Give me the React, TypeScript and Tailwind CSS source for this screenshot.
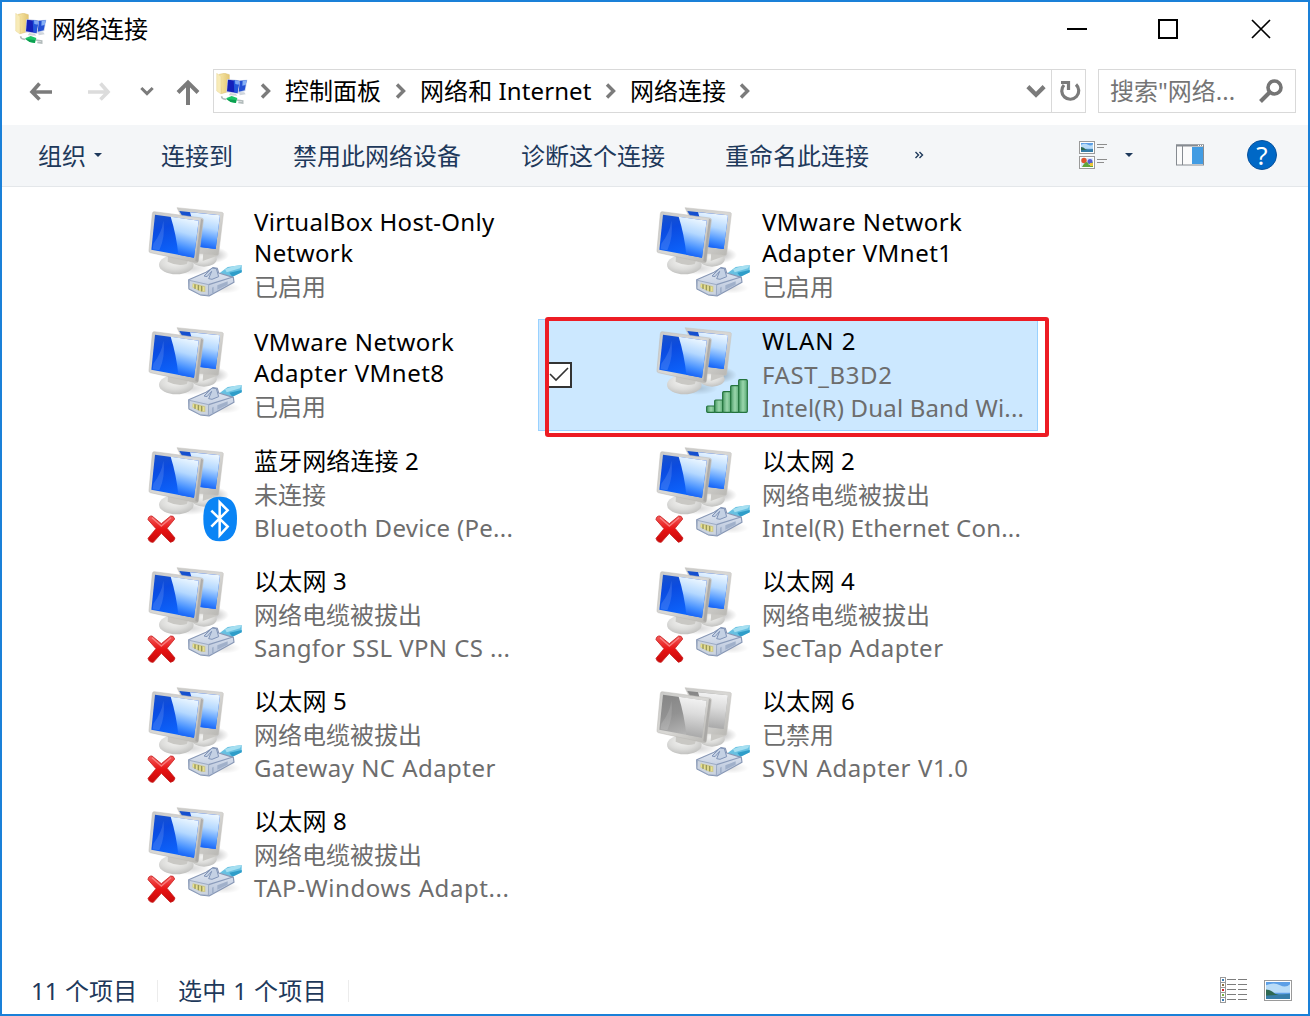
import React from 'react';

type Badge = 'cable' | 'wifi' | 'bluetooth';
type Line = { text: string; cls?: string };
type Connection = {
  title: Line[];
  sub: Line[];
  badge: Badge;
  error?: boolean;
  disabled?: boolean;
  selected?: boolean;
};

const connections: Connection[] = [
  { title: [{ text: 'VirtualBox Host-Only', cls: 'tracking-[0.3px]' }, { text: 'Network', cls: 'tracking-[0.4px]' }], sub: [{ text: '已启用' }], badge: 'cable' },
  { title: [{ text: 'VMware Network', cls: 'tracking-[0.43px]' }, { text: 'Adapter VMnet1', cls: 'tracking-[0.5px]' }], sub: [{ text: '已启用' }], badge: 'cable' },
  { title: [{ text: 'VMware Network', cls: 'tracking-[0.43px]' }, { text: 'Adapter VMnet8', cls: 'tracking-[0.5px]' }], sub: [{ text: '已启用' }], badge: 'cable' },
  { title: [{ text: 'WLAN 2', cls: 'tracking-[1px]' }], sub: [{ text: 'FAST_B3D2', cls: 'tracking-[0.6px]' }, { text: 'Intel(R) Dual Band Wi...', cls: 'tracking-[0.18px]' }], badge: 'wifi', selected: true },
  { title: [{ text: '蓝牙网络连接 2', cls: 'tracking-[0.1px]' }], sub: [{ text: '未连接' }, { text: 'Bluetooth Device (Pe...', cls: 'tracking-[0.3px]' }], badge: 'bluetooth', error: true },
  { title: [{ text: '以太网 2', cls: 'tracking-[0.2px]' }], sub: [{ text: '网络电缆被拔出' }, { text: 'Intel(R) Ethernet Con...', cls: 'tracking-[0.2px]' }], badge: 'cable', error: true },
  { title: [{ text: '以太网 3', cls: 'tracking-[0.2px]' }], sub: [{ text: '网络电缆被拔出' }, { text: 'Sangfor SSL VPN CS ...', cls: 'tracking-[0.4px]' }], badge: 'cable', error: true },
  { title: [{ text: '以太网 4', cls: 'tracking-[0.2px]' }], sub: [{ text: '网络电缆被拔出' }, { text: 'SecTap Adapter', cls: 'tracking-[0.5px]' }], badge: 'cable', error: true },
  { title: [{ text: '以太网 5', cls: 'tracking-[0.2px]' }], sub: [{ text: '网络电缆被拔出' }, { text: 'Gateway NC Adapter', cls: 'tracking-[0.46px]' }], badge: 'cable', error: true },
  { title: [{ text: '以太网 6', cls: 'tracking-[0.2px]' }], sub: [{ text: '已禁用' }, { text: 'SVN Adapter V1.0', cls: 'tracking-[0.6px]' }], badge: 'cable', disabled: true },
  { title: [{ text: '以太网 8', cls: 'tracking-[0.2px]' }], sub: [{ text: '网络电缆被拔出' }, { text: 'TAP-Windows Adapt...', cls: 'tracking-[0.56px]' }], badge: 'cable', error: true },
];

function Gradients() {
  return (
    <svg className="absolute h-0 w-0" aria-hidden="true">
      <defs>
        <linearGradient id="frame" x1="0" y1="0" x2="1" y2="1">
          <stop offset="0" stopColor="#c9c9c7" />
          <stop offset="0.5" stopColor="#d9d8d5" />
          <stop offset="1" stopColor="#b5b4b0" />
        </linearGradient>
        <linearGradient id="blue" x1="0" y1="0" x2="0.35" y2="1">
          <stop offset="0" stopColor="#1b52c8" />
          <stop offset="0.35" stopColor="#0b4be0" />
          <stop offset="1" stopColor="#0d66ff" />
        </linearGradient>
        <linearGradient id="shine" x1="0.6" y1="0" x2="0.4" y2="1">
          <stop offset="0.05" stopColor="#e9f5ff" />
          <stop offset="0.4" stopColor="#b4d8ff" />
          <stop offset="0.75" stopColor="#4590ff" />
          <stop offset="1" stopColor="#0a58f5" />
        </linearGradient>
        <linearGradient id="gray" x1="0" y1="0" x2="0.35" y2="1">
          <stop offset="0" stopColor="#858585" />
          <stop offset="0.5" stopColor="#929292" />
          <stop offset="1" stopColor="#b5b5b5" />
        </linearGradient>
        <linearGradient id="grayShine" x1="0.5" y1="0" x2="0.4" y2="1">
          <stop offset="0" stopColor="#f4f4f4" />
          <stop offset="0.4" stopColor="#dcdcdc" />
          <stop offset="1" stopColor="#a6a6a6" />
        </linearGradient>
        <radialGradient id="base" cx="0.45" cy="0.35" r="0.65">
          <stop offset="0" stopColor="#f4f4f2" />
          <stop offset="0.6" stopColor="#dcdcda" />
          <stop offset="1" stopColor="#c2c2c0" />
        </radialGradient>
        <radialGradient id="shadow">
          <stop offset="0" stopColor="#000" stopOpacity="0.35" />
          <stop offset="1" stopColor="#000" stopOpacity="0" />
        </radialGradient>
        <linearGradient id="bar" x1="0" y1="0" x2="1" y2="0">
          <stop offset="0" stopColor="#4c9c68" />
          <stop offset="0.5" stopColor="#9ad6ac" />
          <stop offset="1" stopColor="#57a873" />
        </linearGradient>
        <linearGradient id="cross" x1="0" y1="0" x2="0" y2="1">
          <stop offset="0" stopColor="#f25a5a" />
          <stop offset="0.5" stopColor="#e81414" />
          <stop offset="1" stopColor="#c80808" />
        </linearGradient>
        <linearGradient id="plug" x1="0" y1="0" x2="0" y2="1">
          <stop offset="0" stopColor="#e6ecf5" />
          <stop offset="1" stopColor="#b4c1d8" />
        </linearGradient>
        <linearGradient id="folder" x1="0" y1="0" x2="1" y2="0">
          <stop offset="0" stopColor="#f7e7a8" />
          <stop offset="1" stopColor="#e3c673" />
        </linearGradient>
      </defs>
    </svg>
  );
}

function ConnectionIcon({ badge, error, disabled }: Pick<Connection, 'badge' | 'error' | 'disabled'>) {
  const dark = disabled ? 'url(#gray)' : 'url(#blue)';
  const light = disabled ? 'url(#grayShine)' : 'url(#shine)';
  const bars = [[198, 286], [222, 268], [246, 243], [270, 225], [294, 207]];
  return (
    <svg width="100" height="100" viewBox="18 18 300 300" className="shrink-0">
      <ellipse cx="205" cy="165" rx="62" ry="26" fill="url(#shadow)" />
      <ellipse cx="150" cy="205" rx="60" ry="20" fill="url(#shadow)" opacity="0.5" />
      <ellipse cx="192" cy="178" rx="38" ry="22" fill="url(#base)" />
      <path d="M190 155l35-4 3 18-40 14z" fill="#c9c8c4" />
      <path d="M111 23l135 14q5 1 4 6l-14 118q-1 6-6 5l-55-6z" fill="url(#frame)" stroke="#c4c3bf" strokeWidth="1.5" />
      <path d="M118 33l122 13-13 101-49-6z" fill={dark} />
      <path d="M150 37l90 9-13 101-45-6z" fill={light} />
      <ellipse cx="109" cy="194" rx="52" ry="29" fill="url(#base)" />
      <path d="M84 166l62 10-6 16q-28 8-57-7z" fill="#c9c8c4" />
      <path d="M43 35l142 19q6 1 5 7l-15 122q-1 6-7 5L31 158q-5-1-4-7L37 41q1-7 6-6z" fill="url(#frame)" stroke="#bab9b5" strokeWidth="1.5" />
      <path d="M183 56l6 3-15 127-8-3z" fill="#a5a4a1" opacity="0.8" />
      <path d="M45 44l131 18-14 111L34 149z" fill={dark} />
      <path d="M92 50l84 12-14 111-47-9q-6-60-23-114z" fill={light} />
      <path d="M40 131q26-34 30-69 7 46-12 89l-20-3z" fill="#fff" opacity="0.13" />
      {badge === 'cable' && (
        <g>
          <ellipse cx="248" cy="264" rx="55" ry="17" fill="url(#shadow)" opacity="0.35" />
          <path d="M240 218l23-17 42-6v22l-24 12-16 8z" fill="#68c1e2" />
          <path d="M255 207l28-9 22-3-5 10-40 12z" fill="#a5dff1" />
          <path d="M268 218l37-8v7l-28 13z" fill="#2f9dc9" />
          <path d="M146 239l52-22 21-14 13 2 4 14 44 13 2 15-75 41-25-3-35-18z" fill="url(#plug)" stroke="#8797b5" strokeWidth="3.5" strokeLinejoin="round" />
          <path d="M148 241l58 13-1 32-24-2-34-18z" fill="#ccd4df" stroke="#8797b5" strokeWidth="2" />
          <path d="M206 254l73-23" fill="none" stroke="#8a9bba" strokeWidth="3.5" />
          <path d="M192 228l24-24 13 2 7 24-20 8-10-2 9-22-14 16z" fill="#c4d1e4" stroke="#8094b8" strokeWidth="3" />
          <path d="M158 250l38 9v17l-12-1-27-13z" fill="#cfc98b" />
          <path d="M165 253v14M175 255v16M185 258v16" stroke="#90904f" strokeWidth="3" />
          <path d="M160 253v9M170 256v12M180 259v13M191 261v12" stroke="#eee88a" strokeWidth="3" />
          <path d="M216 263l5-3v19l-5 3zM232 256l31-12v10l-31 15z" fill="#a0b0ca" />
        </g>
      )}
      {badge === 'wifi' && (
        <g transform="translate(-24 -30)">
          {bars.map(([x, y]) => (
            <rect key={x} x={x + 2} y={y + 2} width="26" height={307 - y - 2} rx="3" fill="url(#bar)" stroke="#24733e" strokeWidth="3.5" />
          ))}
        </g>
      )}
      {badge === 'bluetooth' && (
        <g>
          <path d="M240 170c36 0 51 22 51 66s-15 68-51 68-50-24-50-68 14-66 50-66z" fill="#0a84f5" />
          <path d="M214 212l49 48-24 26v-99l24 24-49 49" fill="none" stroke="#fff" strokeWidth="7.5" />
        </g>
      )}
      {error && (
        <g>
          <path d="M36 228l28 23 28-23q9-2 12 9l-23 28 24 29q-2 12-14 13l-27-27-24 27q-13 1-16-12l24-29-24-27q1-12 12-11z" fill="url(#cross)" stroke="#c92222" strokeWidth="2.5" />
          <path d="M36 233l28 25 29-25" fill="none" stroke="#ff9b9b" strokeWidth="4" opacity="0.7" />
        </g>
      )}
    </svg>
  );
}

function FolderIcon() {
  return (
    <svg width="32" height="32" viewBox="0 0 96 96" className="shrink-0">
      <path d="M10 4l16-3 14 4v50l-24 7z" fill="url(#folder)" stroke="#d8bd6c" strokeWidth="1.5" />
      <path d="M2 1l13 9v53L2 54z" fill="#f8ebb8" stroke="#e0cb84" strokeWidth="1" />
      <path d="M64 22l30-2-6 34-20 5z" fill="#c5d0e8" />
      <path d="M66 24l26-2-6 30-18 4z" fill="#2450d4" />
      <path d="M80 23l12-1-3 14-10 2z" fill="#86b0f6" />
      <path d="M69 57l16 1 4 6-18 3z" fill="#cfd5dc" />
      <path d="M34 18l38 4-5 41-36-6z" fill="#c3cce4" />
      <path d="M36 20l34 4-6 36-31-5z" fill="#1420ba" />
      <path d="M53 22l17 2-6 36-9-2z" fill="#2357da" />
      <path d="M57 22l13 2-2 11-10-2z" fill="#7fa8f5" />
      <path d="M43 60l17 3 4 5-26-1z" fill="#cfd3d6" />
      <path d="M17 70q0 9 13 9M62 81l18 3v6l-13-2" fill="none" stroke="#b3bcbc" strokeWidth="5" />
      <path d="M30 76l17-7 17 6-4 15-16-3z" fill="#1cc566" />
      <path d="M30 78l30 3v9l-16-3z" fill="#0ba050" />
    </svg>
  );
}

function Crumb({ children, className }: { children: React.ReactNode; className: string }) {
  return <span className={`whitespace-nowrap ${className}`}>{children}</span>;
}

function Chevron({ down = false, size = 16 }: { down?: boolean; size?: number }) {
  return (
    <svg width={size} height={size} viewBox="0 0 16 16" fill="none" stroke="#7b7b7b" strokeWidth="3.4" className="shrink-0">
      <path d={down ? 'M1.5 4.5L8 11l6.5-6.5' : 'M4 1.5L10.5 8 4 14.500'} />
    </svg>
  );
}

function Tile({ item }: { item: Connection }) {
  const two = item.title.length === 2;
  return (
    <div
      className={`relative flex h-[112px] w-[500px] border pl-[115px] pt-[6px] ${
        item.selected ? 'border-[#99d1ff] bg-[#cce8ff]' : 'border-transparent'
      }`}
    >
      {item.selected && (
        <>
          <svg width="26" height="26" viewBox="0 0 26 26" className="absolute left-[7px] top-[42px]">
            <rect x="1" y="1" width="24" height="24" fill="#fff" stroke="#333" strokeWidth="2" />
            <path d="M4 12l6 6L22 6" fill="none" stroke="#333" strokeWidth="1.6" />
          </svg>
          <div className="absolute -top-[3px] left-[6px] h-[120px] w-[504px] rounded-[3px] border-4 border-[#ed1c24]" />
        </>
      )}
      <ConnectionIcon badge={item.badge} error={item.error} disabled={item.disabled} />
      <div className={`ml-[8px] whitespace-nowrap ${two ? 'pt-px' : ''}`}>
        <div className="-mt-px mb-[3px]">
          {item.title.map((l) => (
            <div key={l.text} className={`h-[31px] leading-[31px] text-black ${l.cls ?? ''}`}>{l.text}</div>
          ))}
        </div>
        {item.sub.map((l) => (
          <div key={l.text} className={`mb-[2px] h-[31px] leading-[31px] text-[#6d6d6d] ${l.cls ?? ''}`}>{l.text}</div>
        ))}
      </div>
    </div>
  );
}

function Landscape() {
  return (
    <g>
      <rect width="24" height="16" fill="#5c9fe6" />
      <path d="M0 3q8-3 14 0t10-1v8H0z" fill="#b9dcf7" />
      <path d="M0 9q5 0 9 2.500l8 .5h7v4H0z" fill="#3d7f89" />
      <path d="M0 7q5 0 9 4l6 2H0z" fill="#2f6952" />
      <path d="M0 13l24-2v5H0z" fill="#377da8" />
    </g>
  );
}

export default function App() {
  return (
    <div className="flex h-[1016px] w-[1310px] flex-col overflow-hidden border-2 border-[#1a80d8] bg-white font-['Noto_Sans','Noto_Sans_CJK_SC',sans-serif] text-[24px]">
      <Gradients />
      <header className="flex h-[54px] shrink-0 items-center pl-[13px]">
        <FolderIcon />
        <h1 className="ml-[5px] leading-[32px] text-black">网络连接</h1>
        <div className="ml-auto mr-[36px] flex items-center">
          <svg width="22" height="22" viewBox="0 0 22 22"><path d="M1 11h20" stroke="#000" strokeWidth="2" /></svg>
          <svg width="22" height="22" viewBox="0 0 22 22" className="ml-[69px]"><rect x="2" y="2" width="18" height="18" fill="none" stroke="#000" strokeWidth="2" /></svg>
          <svg width="22" height="22" viewBox="0 0 22 22" className="ml-[71px]"><path d="M2 2l18 18M20 2L2 20" stroke="#000" strokeWidth="1.7" /></svg>
        </div>
      </header>

      <nav className="flex h-[69px] shrink-0 items-start pt-[13px]">
        <div className="flex h-[44px] w-[209px] items-center pl-[26px]">
          <svg width="24" height="20" viewBox="0 0 24 20" fill="none" stroke="#7b7b7b" strokeWidth="3.6"><path d="M24 11H4M11.500 2.500L4 11l7.500 7.500" /></svg>
          <svg width="24" height="20" viewBox="0 0 24 20" fill="none" stroke="#dcdcdc" strokeWidth="3.600" className="ml-[36px]"><path d="M0 11h20M12.500 2.500L20 11l-7.500 7.500" /></svg>
          <span className="ml-[28px] flex"><Chevron down size={14} /></span>
          <svg width="24" height="26" viewBox="0 0 24 26" fill="none" stroke="#7b7b7b" strokeWidth="4" className="ml-[22px] mt-[2px]"><path d="M12 26V4M2 13.500L12 3.500l10 10" /></svg>
        </div>
        <div className="ml-[2px] flex h-[44px] w-[873px] items-center border border-[#d9d9d9]">
          <span className="ml-[2px] mt-[-4px] flex"><FolderIcon /></span>
          <span className="ml-[4px] mr-[6px] flex w-[27px] justify-center"><Chevron /></span>
          <Crumb className="w-[96px]">控制面板</Crumb>
          <span className="flex w-[39px] justify-center"><Chevron /></span>
          <Crumb className="w-[172px] tracking-[0.09px]">网络和 Internet</Crumb>
          <span className="flex w-[38px] justify-center"><Chevron /></span>
          <Crumb className="w-[96px]">网络连接</Crumb>
          <span className="flex w-[38px] justify-center"><Chevron /></span>
          <span className="ml-auto mr-[5px] flex"><Chevron down size={20} /></span>
          <div className="flex h-full w-[34px] items-center justify-center border-l border-[#d9d9d9]">
            <svg width="22" height="22" viewBox="0 0 22 22" fill="none" stroke="#7b7b7b" strokeWidth="3.2" className="ml-[2px]">
              <path d="M5 5a8.500 8.500 0 1 0 12-.5" />
              <path d="M2 2.500h7.500V10" />
            </svg>
          </div>
        </div>
        <div className="ml-[12px] flex h-[44px] w-[198px] items-center border border-[#d9d9d9] pl-[11px] text-[#757575]">
          <span className="whitespace-nowrap">搜索"网络...</span>
          <svg width="24" height="24" viewBox="0 0 24 24" fill="none" stroke="#757575" strokeWidth="3.600" className="ml-auto mr-[12px]">
            <circle cx="15.500" cy="8.500" r="6.500" />
            <path d="M11 13L1.500 22.500" strokeWidth="4" />
          </svg>
        </div>
      </nav>

      <div className="flex h-[62px] shrink-0 items-center border-b border-[#e4e7ea] bg-[#f4f6f8] pl-[36px] text-[#1e395b]">
        <span className="w-[48px] whitespace-nowrap">组织</span>
        <span className="ml-[8px] -mt-px h-0 w-0 border-x-[4px] border-t-[4px] border-x-transparent border-t-[#1e395b]" />
        <span className="ml-[59px] w-[72px] whitespace-nowrap">连接到</span>
        <span className="ml-[60px] w-[168px] whitespace-nowrap">禁用此网络设备</span>
        <span className="ml-[60px] w-[144px] whitespace-nowrap">诊断这个连接</span>
        <span className="ml-[60px] w-[144px] whitespace-nowrap">重命名此连接</span>
        <svg width="10" height="8" viewBox="0 0 10 8" fill="none" stroke="#1e395b" strokeWidth="1.400" className="ml-[45px] -mt-[2px]"><path d="M1.500 1l3 3-3 3M5.500 1l3 3-3 3" /></svg>
        <svg width="30" height="30" viewBox="0 0 30 30" className="-mt-[2px] ml-[154px]">
          <rect x="1.500" y="1.500" width="15" height="12" fill="#fff" stroke="#9a9a9a" />
          <svg x="3" y="3" width="12" height="9" viewBox="0 0 24 16" preserveAspectRatio="none"><Landscape /></svg>
          <rect x="1.500" y="16.500" width="15" height="12" fill="#fff" stroke="#9a9a9a" />
          <rect x="3" y="18" width="12" height="9" fill="#dce9fb" />
          <circle cx="6" cy="20.500" r="2.700" fill="#e0532c" />
          <circle cx="12" cy="21.500" r="2.500" fill="#595ed0" />
          <path d="M4 27q5-9 7-2l4-3v5z" fill="#5fa43b" />
          <path d="M12 23h3v3h-3z" fill="#efc43b" />
          <path d="M19 4.500h10M19 7.500h7M19 19.500h10M19 22.500h7" stroke="#8d8d8d" />
        </svg>
        <span className="-mt-px ml-[17px] h-0 w-0 border-x-[4px] border-t-[4px] border-x-transparent border-t-[#1e395b]" />
        <svg width="28" height="22" viewBox="0 0 28 22" className="-mt-[2px] ml-[43px]">
          <rect x="0.500" y="1" width="27" height="20" fill="#fbfbfb" stroke="#868b91" />
          <path d="M0 1.500h28" stroke="#868b91" strokeWidth="2" />
          <path d="M6.500 2v19" stroke="#868b91" />
          <rect x="16" y="3" width="11" height="17" fill="#429ce3" />
          <path d="M22 1.500h1M24 1.500h1M26 1.500h1" stroke="#fff" />
        </svg>
        <span className="-mt-[2px] ml-[43px] flex h-[30px] w-[30px] items-center justify-center rounded-full border border-[#0a529c] bg-[#0068c6] font-['Noto_Sans'] text-[26px] leading-none text-white">?</span>
      </div>

      <main className="grid grow grid-cols-[500px_500px] content-start gap-x-[8px] gap-y-[8px] pl-[28px] pt-[12px]">
        {connections.map((item) => (
          <Tile key={item.title.map((l) => l.text).join(' ') + item.badge} item={item} />
        ))}
      </main>

      <footer className="flex h-[46px] shrink-0 items-center pl-[29px] text-[#1e395b]">
        <span className="w-[126px] whitespace-nowrap tracking-[0.1px]">11 个项目</span>
        <span className="h-[22px] w-px bg-[#ececec]" />
        <span className="ml-[20px] w-[170px] whitespace-nowrap tracking-[0.35px]">选中 1 个项目</span>
        <span className="h-[22px] w-px bg-[#ececec]" />
        <svg width="28" height="28" viewBox="0 0 28 28" className="ml-auto">
          {[0, 5, 10, 15, 20].map((y, i) => (
            <g key={y}>
              <rect x="0.500" y={y + 0.5} width="5" height="5" fill="#fff" stroke="#9a9a9a" />
              <rect x="2" y={y + 2} width="2" height="2" fill={['#3a7cb5', '#8b7040', '#d02020', '#7bb040', '#3a7cb5'][i]} />
              <path d={`M7 ${y + 2.5}h9M18 ${y + 2.5}h9`} stroke="#7d7d7d" />
            </g>
          ))}
        </svg>
        <svg width="28" height="22" viewBox="0 0 28 22" className="ml-[16px] mr-[16px]">
          <rect x="0.500" y="0.500" width="27" height="20" fill="#fff" stroke="#9a9a9a" />
          <svg x="2" y="2" width="24" height="17" viewBox="0 0 24 16" preserveAspectRatio="none"><Landscape /></svg>
        </svg>
      </footer>
    </div>
  );
}
